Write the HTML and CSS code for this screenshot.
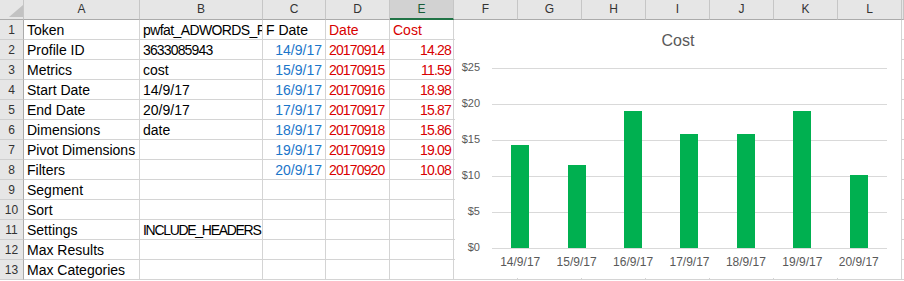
FILE: index.html
```html
<!DOCTYPE html>
<html lang="en">

<head>
    <meta charset="UTF-8">
    <title>Cost report</title>
    <link rel="stylesheet" href="styles.css">
</head>

<body>
    <div class="sheet">
        <div class="hd corner"><span class="tri"></span></div>
        <div class="hd">A</div>
        <div class="hd">B</div>
        <div class="hd">C</div>
        <div class="hd">D</div>
        <div class="hd sel">E</div>
        <div class="hd">F</div>
        <div class="hd">G</div>
        <div class="hd">H</div>
        <div class="hd">I</div>
        <div class="hd">J</div>
        <div class="hd">K</div>
        <div class="hd">L</div>
        <div class="hd"></div>

        <div class="rn">1</div>
        <div class="c">Token</div>
        <div class="c clip"><span>pwfat_ADWORDS_F</span></div>
        <div class="c">F Date</div>
        <div class="c red">Date</div>
        <div class="c red">Cost</div>
        <div class="c"></div><div class="c"></div><div class="c"></div><div class="c"></div><div class="c"></div><div class="c"></div><div class="c"></div><div class="c"></div>

        <div class="rn">2</div>
        <div class="c">Profile ID</div>
        <div class="c tight">3633085943</div>
        <div class="c date">14/9/17</div>
        <div class="c red tight">20170914</div>
        <div class="c red num">14.28</div>
        <div class="c"></div><div class="c"></div><div class="c"></div><div class="c"></div><div class="c"></div><div class="c"></div><div class="c"></div><div class="c"></div>

        <div class="rn">3</div>
        <div class="c">Metrics</div>
        <div class="c">cost</div>
        <div class="c date">15/9/17</div>
        <div class="c red tight">20170915</div>
        <div class="c red num">11.59</div>
        <div class="c"></div><div class="c"></div><div class="c"></div><div class="c"></div><div class="c"></div><div class="c"></div><div class="c"></div><div class="c"></div>

        <div class="rn">4</div>
        <div class="c">Start Date</div>
        <div class="c">14/9/17</div>
        <div class="c date">16/9/17</div>
        <div class="c red tight">20170916</div>
        <div class="c red num">18.98</div>
        <div class="c"></div><div class="c"></div><div class="c"></div><div class="c"></div><div class="c"></div><div class="c"></div><div class="c"></div><div class="c"></div>

        <div class="rn">5</div>
        <div class="c">End Date</div>
        <div class="c">20/9/17</div>
        <div class="c date">17/9/17</div>
        <div class="c red tight">20170917</div>
        <div class="c red num">15.87</div>
        <div class="c"></div><div class="c"></div><div class="c"></div><div class="c"></div><div class="c"></div><div class="c"></div><div class="c"></div><div class="c"></div>

        <div class="rn">6</div>
        <div class="c">Dimensions</div>
        <div class="c">date</div>
        <div class="c date">18/9/17</div>
        <div class="c red tight">20170918</div>
        <div class="c red num">15.86</div>
        <div class="c"></div><div class="c"></div><div class="c"></div><div class="c"></div><div class="c"></div><div class="c"></div><div class="c"></div><div class="c"></div>

        <div class="rn">7</div>
        <div class="c">Pivot Dimensions</div>
        <div class="c"></div>
        <div class="c date">19/9/17</div>
        <div class="c red tight">20170919</div>
        <div class="c red num">19.09</div>
        <div class="c"></div><div class="c"></div><div class="c"></div><div class="c"></div><div class="c"></div><div class="c"></div><div class="c"></div><div class="c"></div>

        <div class="rn">8</div>
        <div class="c">Filters</div>
        <div class="c"></div>
        <div class="c date">20/9/17</div>
        <div class="c red tight">20170920</div>
        <div class="c red num">10.08</div>
        <div class="c"></div><div class="c"></div><div class="c"></div><div class="c"></div><div class="c"></div><div class="c"></div><div class="c"></div><div class="c"></div>

        <div class="rn">9</div>
        <div class="c">Segment</div>
        <div class="c"></div><div class="c"></div><div class="c"></div><div class="c"></div>
        <div class="c"></div><div class="c"></div><div class="c"></div><div class="c"></div><div class="c"></div><div class="c"></div><div class="c"></div><div class="c"></div>

        <div class="rn">10</div>
        <div class="c">Sort</div>
        <div class="c"></div><div class="c"></div><div class="c"></div><div class="c"></div>
        <div class="c"></div><div class="c"></div><div class="c"></div><div class="c"></div><div class="c"></div><div class="c"></div><div class="c"></div><div class="c"></div>

        <div class="rn">11</div>
        <div class="c">Settings</div>
        <div class="c caps">INCLUDE_HEADERS</div>
        <div class="c"></div><div class="c"></div><div class="c"></div>
        <div class="c"></div><div class="c"></div><div class="c"></div><div class="c"></div><div class="c"></div><div class="c"></div><div class="c"></div><div class="c"></div>

        <div class="rn">12</div>
        <div class="c">Max Results</div>
        <div class="c"></div><div class="c"></div><div class="c"></div><div class="c"></div>
        <div class="c"></div><div class="c"></div><div class="c"></div><div class="c"></div><div class="c"></div><div class="c"></div><div class="c"></div><div class="c"></div>

        <div class="rn">13</div>
        <div class="c">Max Categories</div>
        <div class="c"></div><div class="c"></div><div class="c"></div><div class="c"></div>
        <div class="c"></div><div class="c"></div><div class="c"></div><div class="c"></div><div class="c"></div><div class="c"></div><div class="c"></div><div class="c"></div>

        <!-- chart floats over columns F to L -->
        <div class="chart">
            <div class="chart-title">Cost</div>
            <div class="chart-body">
                <div class="y-axis">
                    <span>$25</span>
                    <span>$20</span>
                    <span>$15</span>
                    <span>$10</span>
                    <span>$5</span>
                    <span>$0</span>
                </div>
                <div class="plot-col">
                    <div class="plot">
                        <div class="slot"><div class="bar" style="height: 102.8px;"></div></div>
                        <div class="slot"><div class="bar" style="height: 83.4px;"></div></div>
                        <div class="slot"><div class="bar" style="height: 136.7px;"></div></div>
                        <div class="slot"><div class="bar" style="height: 114.3px;"></div></div>
                        <div class="slot"><div class="bar" style="height: 114.2px;"></div></div>
                        <div class="slot"><div class="bar" style="height: 137.4px;"></div></div>
                        <div class="slot"><div class="bar" style="height: 72.6px;"></div></div>
                    </div>
                    <div class="x-axis">
                        <span>14/9/17</span>
                        <span>15/9/17</span>
                        <span>16/9/17</span>
                        <span>17/9/17</span>
                        <span>18/9/17</span>
                        <span>19/9/17</span>
                        <span>20/9/17</span>
                    </div>
                </div>
            </div>
        </div>
    </div>
</body>

</html>
```

FILE: styles.css
```css
* {
    box-sizing: border-box;
}

body {
    margin: 0;
    overflow: hidden;
    background-color: #fff;
    font-family: "Liberation Sans", Arial, sans-serif;
    color: #000;
}

.sheet {
    position: relative;
    display: grid;
    grid-template-columns: 24px 116px 123px 63px 64px 64px repeat(7, 64px) 2px;
    grid-auto-rows: 20px;
    overflow: hidden;
}

/* column headers */
.hd {
    background-color: #e6e6e6;
    border-right: 1px solid #c6c6c6;
    border-bottom: 1px solid #ababab;
    font-size: 12px;
    line-height: 19px;
    text-align: center;
    color: #333;
}

.hd.sel {
    background-color: #d2d2d2;
    color: #185c37;
    border-bottom: 2px solid #217346;
    line-height: 18px;
}

.corner {
    display: flex;
    align-items: flex-end;
    justify-content: flex-end;
    padding-bottom: 2px;
}

.tri {
    width: 14px;
    height: 12px;
    background-color: #c2c2c2;
    clip-path: polygon(100% 0, 100% 100%, 0 100%);
}

/* row numbers */
.rn {
    background-color: #e6e6e6;
    border-right: 1px solid #ababab;
    border-bottom: 1px solid #cfcfcf;
    font-size: 12px;
    line-height: 20px;
    text-align: center;
    color: #333;
}

/* cells */
.c {
    border-right: 1px solid #d4d4d4;
    border-bottom: 1px solid #d4d4d4;
    padding: 1px 3px 0;
    font-size: 14px;
    line-height: 19px;
    white-space: nowrap;
}

.clip {
    overflow: hidden;
    padding-right: 0;
    letter-spacing: -0.6px;
}

.caps {
    letter-spacing: -1.3px;
}

.tight {
    letter-spacing: -0.85px;
}

.date {
    text-align: right;
    color: #1a75c9;
    padding-right: 3px;
}

.num {
    text-align: right;
    letter-spacing: -0.8px;
    padding-right: 2px;
}

.red {
    color: #d80000;
}

/* chart */
.chart {
    position: absolute;
    left: 455px;
    top: 20px;
    width: 446px;
    height: 258px;
    background-color: #fff;
    color: #595959;
}

.chart-title {
    padding-top: 11px;
    font-size: 16px;
    line-height: 20px;
    text-align: center;
}

.chart-body {
    display: flex;
    margin-top: 17px;
}

.y-axis {
    width: 25px;
    height: 193px;
    margin-top: -7px;
    margin-right: 12px;
    display: flex;
    flex-direction: column;
    justify-content: space-between;
    text-align: right;
    font-size: 11px;
    line-height: 13px;
}

.plot-col {
    width: 395px;
}

.plot {
    height: 181px;
    display: flex;
    padding-bottom: 1px;
    background: repeating-linear-gradient(to bottom, #d9d9d9 0, #d9d9d9 1px, transparent 1px, transparent 36px);
}

.slot {
    flex: 1;
    display: flex;
    justify-content: center;
    align-items: flex-end;
}

.bar {
    width: 18px;
    background-color: #00b050;
}

.x-axis {
    display: flex;
    margin-top: 6px;
    font-size: 12px;
    line-height: 14px;
}

.x-axis span {
    flex: 1;
    text-align: center;
}
```
